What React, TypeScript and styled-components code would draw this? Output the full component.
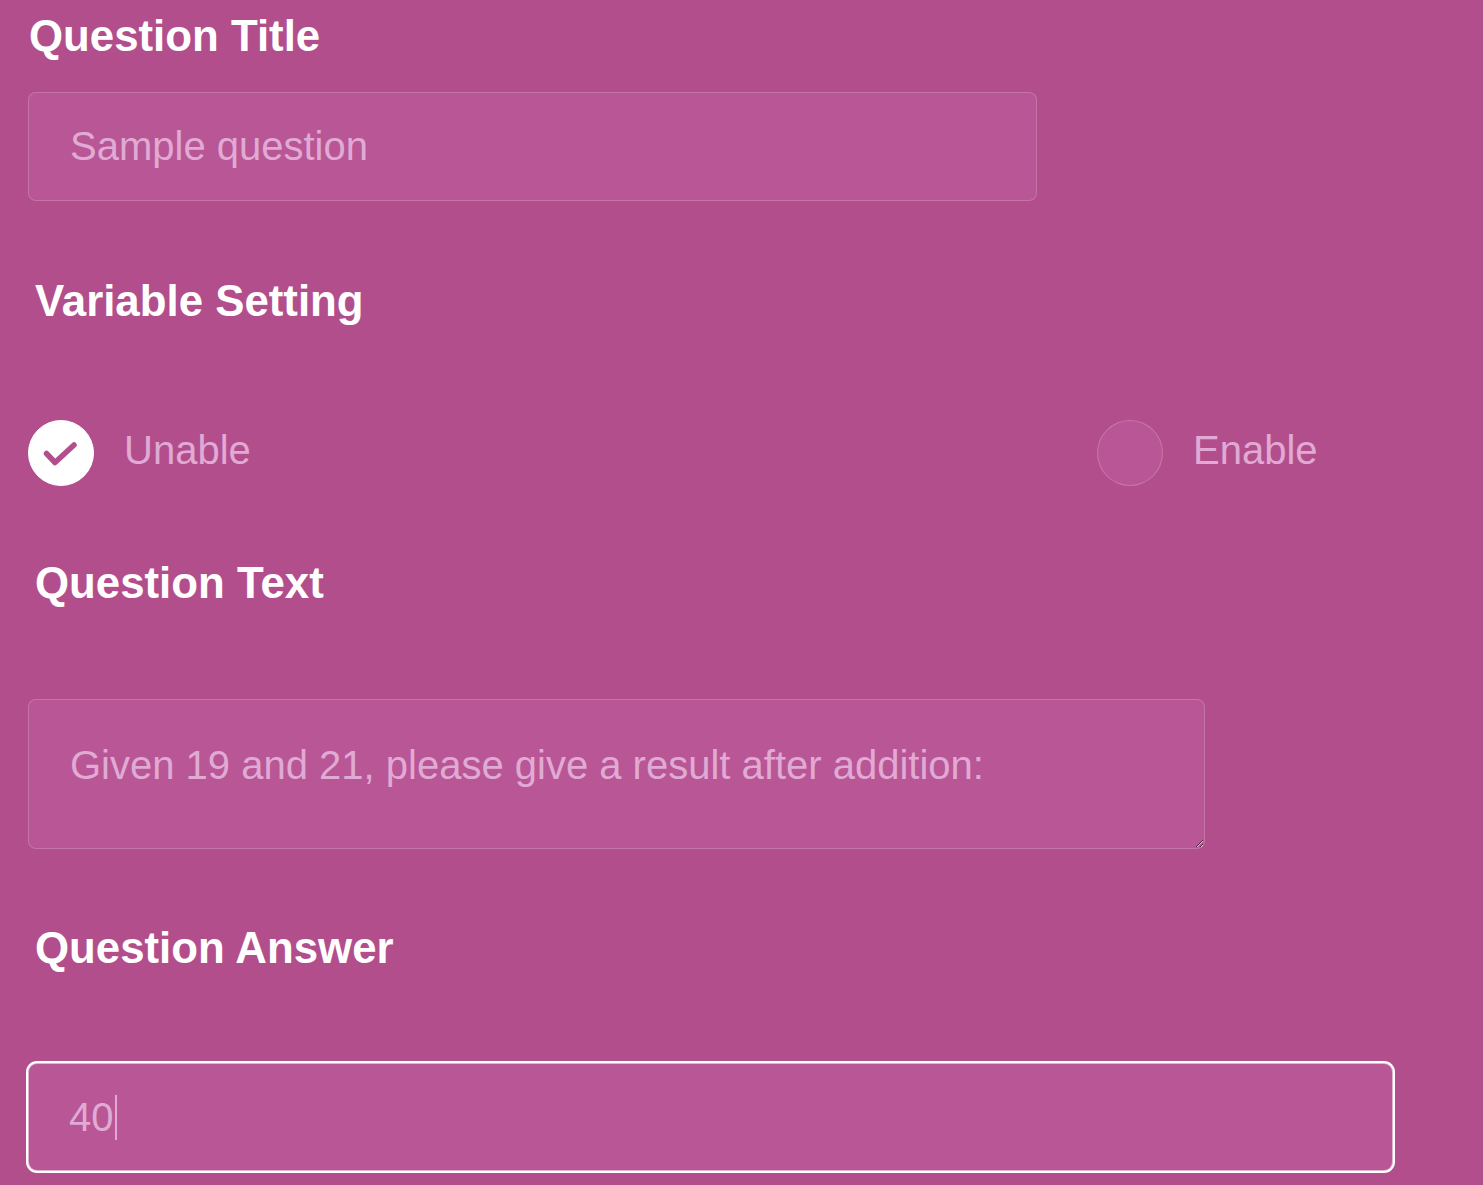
import React from 'react';
import styled, { createGlobalStyle } from 'styled-components';

const GlobalStyle = createGlobalStyle`
  html, body {
    margin: 0;
    padding: 0;
    background: #b34e8c;
  }
  body {
    font-family: 'Liberation Sans', Arial, sans-serif;
  }
`;

const Page = styled.div`
  min-height: 1185px;
  padding: 0 0 0 28px;
  box-sizing: border-box;
  background: #b34e8c;
  overflow: hidden;
`;

type LabelProps = {
  $top: number;
  $indent: number;
};

const Label = styled.h2<LabelProps>`
  margin: ${({ $top }) => $top}px 0 0;
  padding-left: ${({ $indent }) => $indent}px;
  font-size: 43.8px;
  line-height: 50px;
  font-weight: bold;
  color: #ffffff;
`;

const Input = styled.input`
  display: block;
  box-sizing: border-box;
  margin-top: 31px;
  width: 1009px;
  height: 109px;
  padding: 0 41px;
  border: 1px solid rgba(255, 255, 255, 0.18);
  border-radius: 8px;
  background: #b95695;
  font-family: 'Liberation Sans', Arial, sans-serif;
  font-size: 40px;
  color: #e0aad4;
  outline: none;
  &::placeholder {
    color: #e0aad4;
  }
`;

const Options = styled.div`
  display: grid;
  grid-template-columns: 1069px auto;
  margin-top: 94px;
  height: 66px;
`;

const Option = styled.label`
  display: flex;
  align-items: center;
  gap: 30px;
  cursor: pointer;
`;

type CircleProps = {
  $checked?: boolean;
};

const Circle = styled.span<CircleProps>`
  display: flex;
  align-items: center;
  justify-content: center;
  box-sizing: border-box;
  width: 66px;
  height: 66px;
  border-radius: 50%;
  background: ${({ $checked }) => ($checked ? '#ffffff' : '#b95695')};
  border: 1px solid
    ${({ $checked }) => ($checked ? '#ffffff' : 'rgba(255, 255, 255, 0.2)')};
`;

const OptionText = styled.span`
  font-size: 40px;
  line-height: 46px;
  color: #e0aad4;
  margin-bottom: 7px;
`;

const TextArea = styled.textarea`
  display: block;
  box-sizing: border-box;
  margin-top: 91px;
  width: 1177px;
  height: 150px;
  padding: 42px 41px 0;
  border: 1px solid rgba(255, 255, 255, 0.18);
  border-radius: 8px;
  background: #b95695;
  font-family: 'Liberation Sans', Arial, sans-serif;
  font-size: 40px;
  line-height: 46px;
  color: #e0aad4;
  outline: none;
  &::placeholder {
    color: #e0aad4;
  }
`;

const AnswerBox = styled.div`
  display: flex;
  align-items: center;
  box-sizing: border-box;
  margin-top: 90px;
  width: 1365px;
  height: 108px;
  padding: 0 40px;
  border: 1px solid rgba(255, 255, 255, 0.55);
  border-radius: 9px;
  box-shadow: 0 0 0 2px #ffffff;
  background: #b95695;
`;

const AnswerValue = styled.span`
  font-size: 40px;
  line-height: 46px;
  color: #e0aad4;
`;

const Caret = styled.span`
  display: inline-block;
  width: 2px;
  height: 45px;
  margin-left: 1px;
  background: #e0aad4;
`;

const Check = () => (
  <svg width="66" height="66" viewBox="0 0 66 66" style={{ margin: -1 }}>
    <polyline
      points="18.5,33.5 27,42.5 46,25"
      fill="none"
      stroke="#b34e8c"
      strokeWidth="5.5"
      strokeLinecap="round"
      strokeLinejoin="round"
    />
  </svg>
);

const App = () => {
  return (
    <Page>
      <GlobalStyle />
      <Label $top={11} $indent={1}>
        Question Title
      </Label>
      <Input placeholder='Sample question' />

      <Label $top={75} $indent={7}>
        Variable Setting
      </Label>
      <Options>
        <Option>
          <Circle $checked>
            <Check />
          </Circle>
          <OptionText>Unable</OptionText>
        </Option>
        <Option>
          <Circle />
          <OptionText>Enable</OptionText>
        </Option>
      </Options>

      <Label $top={72} $indent={7}>
        Question Text
      </Label>
      <TextArea placeholder='Given 19 and 21, please give a result after addition:' />

      <Label $top={74} $indent={7}>
        Question Answer
      </Label>
      <AnswerBox>
        <AnswerValue>40</AnswerValue>
        <Caret />
      </AnswerBox>
    </Page>
  );
};

export default App;
